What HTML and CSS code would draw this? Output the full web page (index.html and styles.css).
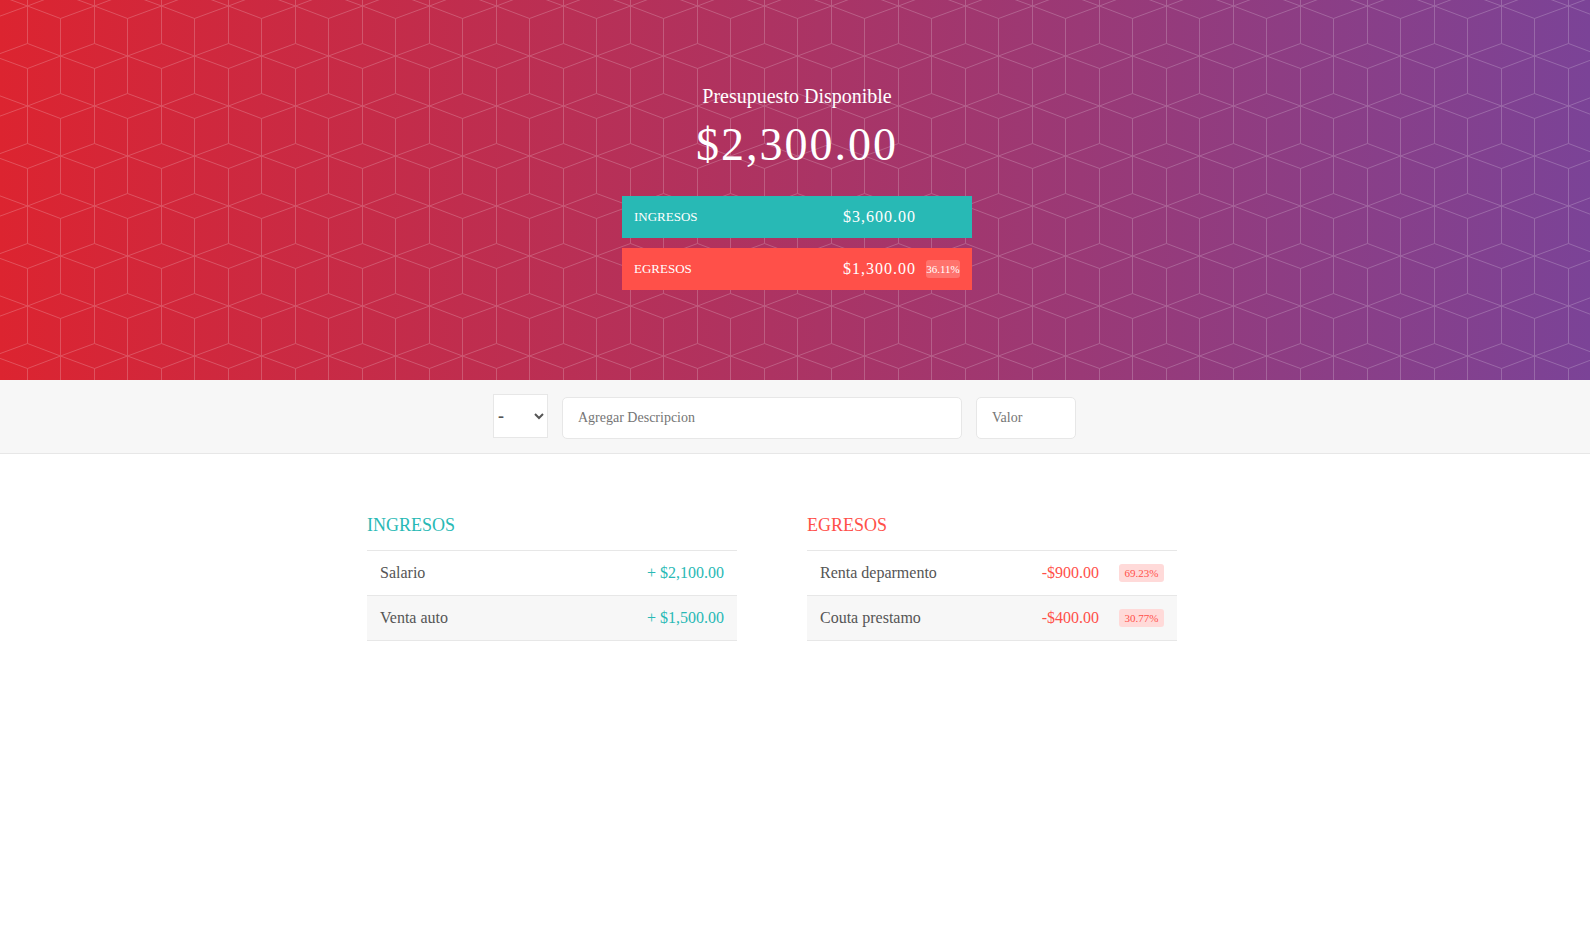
FILE: index.html
```html
<!DOCTYPE html>
<html lang="es">
<head>
  <meta charset="utf-8">
  <meta name="viewport" content="width=device-width, initial-scale=1">
  <title>Presupuesto</title>
  <link rel="stylesheet" href="styles.css">
</head>
<body>
  <header class="top">
    <svg class="top-pattern" aria-hidden="true">
      <defs>
        <pattern id="cubes" width="67" height="100" patternUnits="userSpaceOnUse">
          <path fill="none" stroke="#fff" stroke-width="1" d="M27.5 -31.5V43.5M27.5 68.5V143.5M60.5 18.5V93.5
            M-6.5 -6.5L27.5 6L60.5 -6.5M-6.5 18.5L27.5 6L60.5 18.5L94.5 6
            M-6.5 93.5L27.5 106L60.5 93.5L94.5 106M27.5 106L60.5 118.5
            M-6.5 56L27.5 43.5L60.5 56L94.5 43.5M-6.5 56L27.5 68.5L60.5 56L94.5 68.5"/>
        </pattern>
      </defs>
      <rect width="100%" height="100%" fill="url(#cubes)"/>
    </svg>
    <div class="budget">
      <h1 class="budget-title">Presupuesto Disponible</h1>
      <p class="budget-value">$2,300.00</p>
      <div class="budget-row budget-income">
        <span class="budget-label">INGRESOS</span>
        <span class="budget-amount">$3,600.00</span>
        <span class="budget-percent budget-percent-empty"></span>
      </div>
      <div class="budget-row budget-expense">
        <span class="budget-label">EGRESOS</span>
        <span class="budget-amount">$1,300.00</span>
        <span class="budget-percent">36.11%</span>
      </div>
    </div>
  </header>

  <main>
    <form class="add">
      <select class="add-type" aria-label="Tipo">
        <option value="ingreso">+</option>
        <option value="egreso" selected>-</option>
      </select>
      <input class="add-field add-description" type="text" placeholder="Agregar Descripcion" aria-label="Descripcion">
      <input class="add-field add-value" type="number" placeholder="Valor" aria-label="Valor">
    </form>

    <div class="lists">
      <section class="list list-income">
        <h2 class="list-title">INGRESOS</h2>
        <ul class="items">
          <li class="item"><span class="item-name">Salario</span><span class="item-value">+ $2,100.00</span></li>
          <li class="item"><span class="item-name">Venta auto</span><span class="item-value">+ $1,500.00</span></li>
        </ul>
      </section>
      <section class="list list-expense">
        <h2 class="list-title">EGRESOS</h2>
        <ul class="items">
          <li class="item"><span class="item-name">Renta deparmento</span><span class="item-value">-$900.00</span><span class="item-percent">69.23%</span></li>
          <li class="item"><span class="item-name">Couta prestamo</span><span class="item-value">-$400.00</span><span class="item-percent">30.77%</span></li>
        </ul>
      </section>
    </div>
  </main>
</body>
</html>
```

FILE: styles.css
```css
* {
  box-sizing: border-box;
  margin: 0;
  padding: 0;
}

body {
  background: #fff;
  color: #555;
  font-family: "Liberation Serif", "Times New Roman", serif;
  font-size: 16px;
}

.top {
  position: relative;
  display: flex;
  justify-content: center;
  padding: 84px 0 90px 4px;
  background: linear-gradient(to right, #dc2430, #7b4397);
}

.top-pattern {
  position: absolute;
  inset: 0;
  width: 100%;
  height: 100%;
  opacity: 0.2;
}

.budget {
  position: relative;
  width: 350px;
  color: #fff;
}

.budget-title {
  font-size: 20px;
  font-weight: 400;
  line-height: 25px;
  text-align: center;
}

.budget-value {
  margin: 10px 0 25px;
  font-size: 46px;
  letter-spacing: 2px;
  line-height: 52px;
  text-align: center;
}

.budget-row {
  display: flex;
  align-items: center;
  height: 42px;
  padding: 0 12px;
}

.budget-income {
  margin-bottom: 10px;
  background: #28b9b5;
}

.budget-expense {
  background: #ff5049;
}

.budget-label {
  flex: 1;
  font-size: 13px;
}

.budget-amount {
  font-size: 16px;
  letter-spacing: 1px;
}

.budget-percent {
  width: 34px;
  height: 18px;
  margin-left: 10px;
  border-radius: 3px;
  background: rgba(255, 255, 255, 0.2);
  font-size: 11px;
  line-height: 19px;
  text-align: center;
}

.budget-percent-empty {
  background: none;
}

.add {
  display: flex;
  align-items: baseline;
  justify-content: center;
  gap: 14px;
  padding: 14px 21px 14px 0;
  border-bottom: 1px solid #e7e7e7;
  background: #f7f7f7;
}

.add-type {
  width: 55px;
  height: 44px;
  border: 1px solid #e7e7e7;
  background: #fff;
  color: #555;
  font-family: inherit;
  font-size: 18px;
  font-weight: 700;
}

.add-field {
  height: 42px;
  padding: 0 15px;
  border: 1px solid #e7e7e7;
  border-radius: 5px;
  background: #fff;
  color: #555;
  font-family: inherit;
  font-size: 14px;
}

.add-field::placeholder {
  color: #757575;
}

.add-description {
  width: 400px;
}

.add-value {
  width: 100px;
}

.lists {
  display: flex;
  flex-wrap: wrap;
  justify-content: center;
  gap: 70px;
  padding: 60px 46px 60px 0;
}

.list {
  width: 370px;
}

.list-title {
  margin-bottom: 13px;
  font-size: 18px;
  font-weight: 400;
  line-height: 23px;
}

.list-income {
  color: #28b9b5;
}

.list-expense {
  color: #ff5049;
}

.items {
  list-style: none;
  border-top: 1px solid #e7e7e7;
}

.item {
  display: flex;
  align-items: center;
  height: 45px;
  padding: 0 13px;
  border-bottom: 1px solid #e7e7e7;
}

.item:nth-child(even) {
  background: #f7f7f7;
}

.item-name {
  flex: 1;
  color: #555;
}

.item-percent {
  width: 45px;
  height: 18px;
  margin-left: 20px;
  border-radius: 3px;
  background: #ffdad9;
  font-size: 11px;
  line-height: 19px;
  text-align: center;
}
```
